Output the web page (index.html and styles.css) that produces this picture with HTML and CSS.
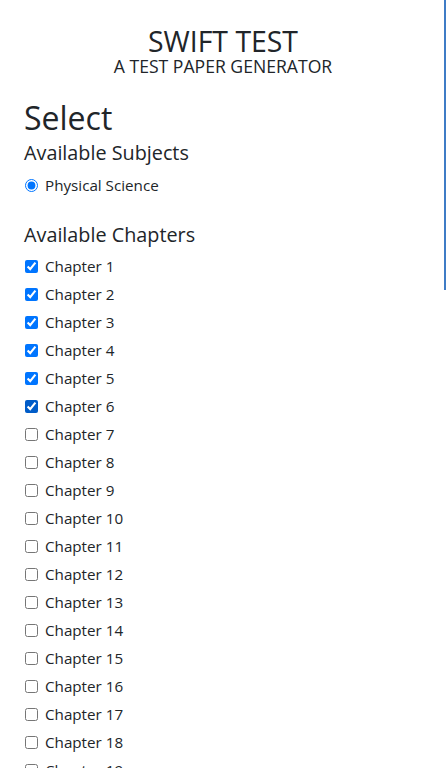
FILE: index.html
```html
<!DOCTYPE html>
<html lang="en">
<head>
<meta charset="utf-8">
<title>Swift Test</title>
<link rel="stylesheet" href="styles.css">
</head>
<body>
<div class="scroll-thumb"></div>
<header class="header">
  <h1 class="title">SWIFT TEST</h1>
  <h5 class="subtitle">A TEST PAPER GENERATOR</h5>
</header>
<main class="content">
  <h1 class="select">Select</h1>
  <h4 class="section-title">Available Subjects</h4>
  <div class="option"><input type="radio" name="subject" checked><label>Physical Science</label></div>
  <h4 class="section-title chapters-title">Available Chapters</h4>
  <div class="option"><input type="checkbox" checked><label>Chapter 1</label></div>
  <div class="option"><input type="checkbox" checked><label>Chapter 2</label></div>
  <div class="option"><input type="checkbox" checked><label>Chapter 3</label></div>
  <div class="option"><input type="checkbox" checked><label>Chapter 4</label></div>
  <div class="option"><input type="checkbox" checked><label>Chapter 5</label></div>
  <div class="option"><input type="checkbox" class="hovered" checked><label>Chapter 6</label></div>
  <div class="option"><input type="checkbox"><label>Chapter 7</label></div>
  <div class="option"><input type="checkbox"><label>Chapter 8</label></div>
  <div class="option"><input type="checkbox"><label>Chapter 9</label></div>
  <div class="option"><input type="checkbox"><label>Chapter 10</label></div>
  <div class="option"><input type="checkbox"><label>Chapter 11</label></div>
  <div class="option"><input type="checkbox"><label>Chapter 12</label></div>
  <div class="option"><input type="checkbox"><label>Chapter 13</label></div>
  <div class="option"><input type="checkbox"><label>Chapter 14</label></div>
  <div class="option"><input type="checkbox"><label>Chapter 15</label></div>
  <div class="option"><input type="checkbox"><label>Chapter 16</label></div>
  <div class="option"><input type="checkbox"><label>Chapter 17</label></div>
  <div class="option"><input type="checkbox"><label>Chapter 18</label></div>
  <div class="option"><input type="checkbox"><label>Chapter 19</label></div>
  <div class="option"><input type="checkbox"><label>Chapter 20</label></div>
</main>
</body>
</html>
```
FILE: styles.css
```css
html, body {
  margin: 0;
  padding: 0;
  overflow: hidden;
  height: 100%;
}
body {
  font-family: "Open Sans", "Noto Sans", sans-serif;
  color: #212529;
  background: #fff;
}
.scroll-thumb {
  position: fixed;
  top: 0;
  right: 0;
  width: 2px;
  height: 290px;
  background: #3f7cc6;
}
.header {
  text-align: center;
  padding-top: 28px;
}
.title {
  margin: 0;
  font-size: 28.4px;
  line-height: 27px;
  font-weight: 400;
}
.subtitle {
  margin: 0;
  font-size: 17.6px;
  line-height: 22px;
  font-weight: 400;
}
.content {
  padding-left: 24px;
}
.select {
  margin: 19px 0 0;
  font-size: 32px;
  line-height: 43px;
  font-weight: 500;
}
.section-title {
  margin: 1px 0 0;
  font-size: 19.8px;
  line-height: 26px;
  font-weight: 400;
}
.chapters-title {
  margin-top: 23px;
}
.option {
  display: flex;
  align-items: center;
  height: 28px;
  font-size: 15.2px;
  line-height: 28px;
}
.section-title + .option { margin-top: 5px; }
.chapters-title + .option { margin-top: 4px; }
.option input {
  margin: 0 7px 0 1px;
  width: 13px;
  height: 13px;
}
.option input.hovered {
  accent-color: #005cc8;
}
```
